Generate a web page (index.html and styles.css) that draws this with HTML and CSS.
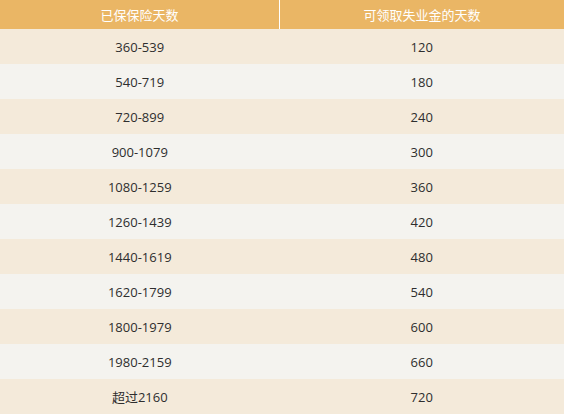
FILE: index.html
```html
<!DOCTYPE html>
<html lang="zh">
<head>
<meta charset="utf-8">
<link rel="stylesheet" href="styles.css">
</head>
<body>
<table class="days">
  <thead>
    <tr><th class="c1">已保保险天数</th><th class="c2">可领取失业金的天数</th></tr>
  </thead>
  <tbody>
    <tr><td>360-539</td><td>120</td></tr>
    <tr><td>540-719</td><td>180</td></tr>
    <tr><td>720-899</td><td>240</td></tr>
    <tr><td>900-1079</td><td>300</td></tr>
    <tr><td>1080-1259</td><td>360</td></tr>
    <tr><td>1260-1439</td><td>420</td></tr>
    <tr><td>1440-1619</td><td>480</td></tr>
    <tr><td>1620-1799</td><td>540</td></tr>
    <tr><td>1800-1979</td><td>600</td></tr>
    <tr><td>1980-2159</td><td>660</td></tr>
    <tr><td>超过2160</td><td>720</td></tr>
  </tbody>
</table>
</body>
</html>
```
FILE: styles.css
```css
html, body {
  margin: 0;
  padding: 0;
  background: #f4f3ef;
}
.days {
  width: 564px;
  border-collapse: collapse;
  table-layout: fixed;
  font-family: "Open Sans", "Noto Sans CJK SC", sans-serif;
  font-size: 13px;
}
.days th {
  height: 29px;
  padding: 0;
  background: #eab665;
  color: #ffffff;
  font-weight: normal;
  text-align: center;
  font-size: 13px;
}
.days th.c1 {
  width: 279px;
  border-right: 1px solid #ffffff;
}
.days td {
  height: 35px;
  padding: 0;
  text-align: center;
  color: #2e2e2e;
}
.days tbody tr:nth-child(odd) td {
  background: #f4eada;
}
.days tbody tr:nth-child(even) td {
  background: #f4f3ef;
}
```
